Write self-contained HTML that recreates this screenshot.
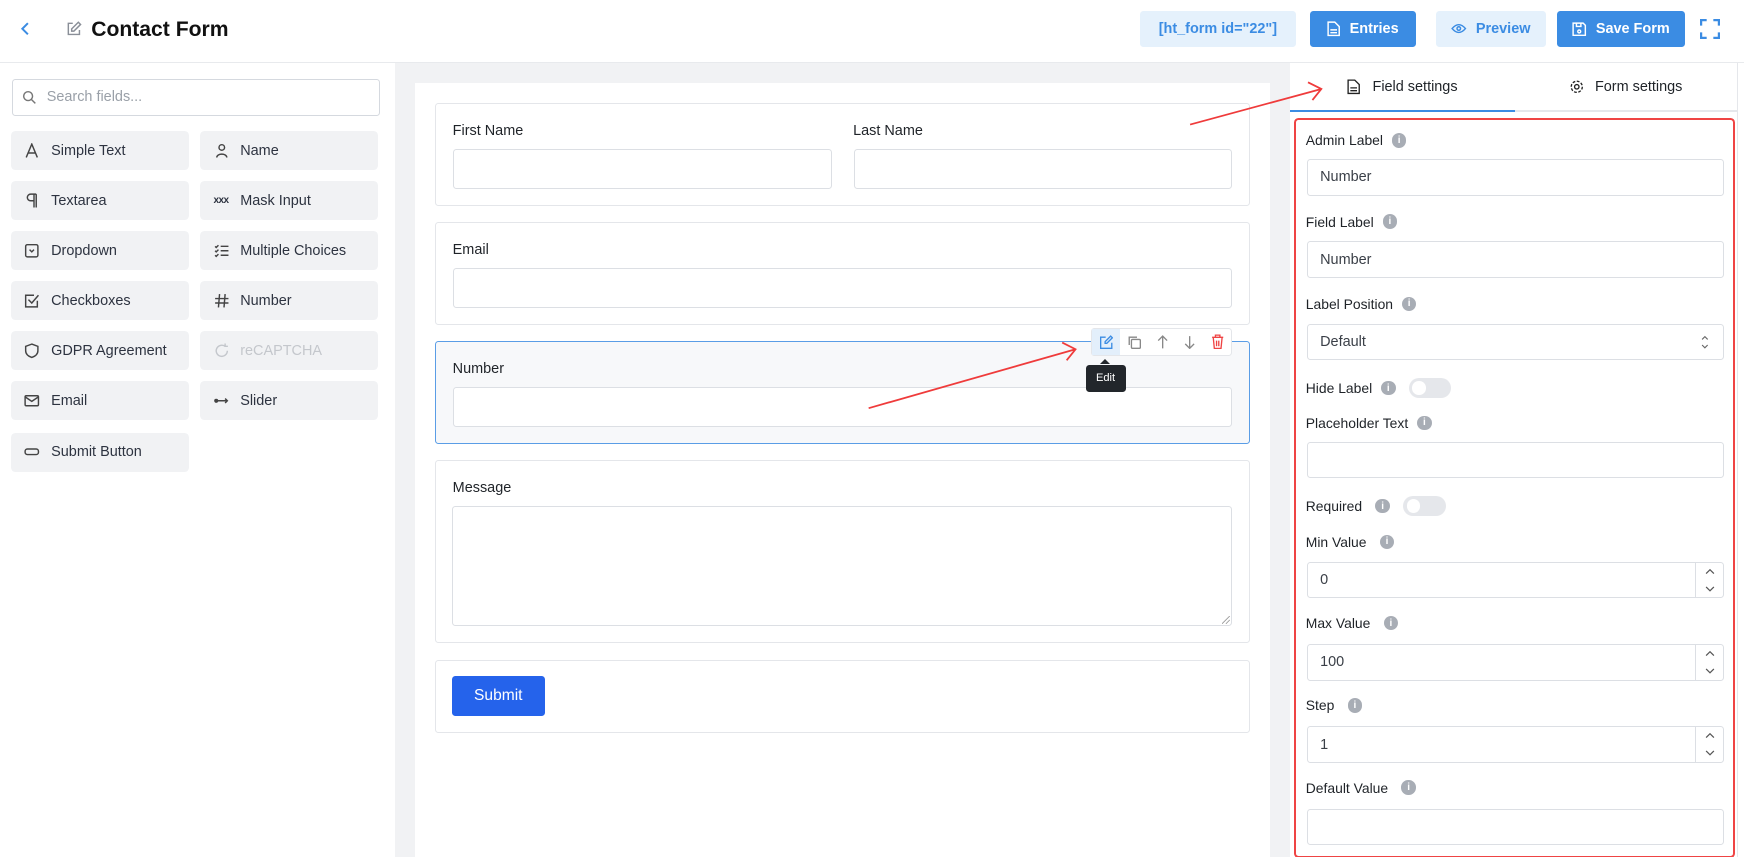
<!DOCTYPE html>
<html><head><meta charset="utf-8"><style>
*{box-sizing:border-box;margin:0;padding:0}
html,body{width:1744px;height:857px;overflow:hidden;background:#fff}
#w{position:relative;width:1568px;height:771px;zoom:1.11224;font-family:"Liberation Sans",sans-serif;color:#1f2328;font-size:13px}
.a{position:absolute}
.btn{position:absolute;top:10px;height:32px;border-radius:3px;display:flex;align-items:center;justify-content:center;font-weight:bold;font-size:13px;gap:8px}
.fb{position:absolute;width:160px;height:35px;background:#f1f2f4;border-radius:4px;display:flex;align-items:center;padding-left:12px;gap:10px;color:#2d3340;font-size:13px}
.fb svg{width:14px;height:14px}
.box{position:absolute;left:391px;width:733px;border:1px solid #e4e6ea;border-radius:3px;background:#fff}
.inp{position:absolute;border:1px solid #dcdfe4;border-radius:3px;background:#fff}
.lb{position:absolute;font-size:13px;color:#1f2328}
.rl{position:absolute;left:1174px;font-size:12.5px;color:#1f2328;display:flex;align-items:center;gap:8px}
.i{width:13px;height:13px;border-radius:50%;background:#a8adb5;color:#fff;font-size:9px;font-weight:bold;display:inline-flex;align-items:center;justify-content:center}
.ri{position:absolute;left:1175px;width:375px;height:33px;border:1px solid #dcdfe4;border-radius:3px;background:#fff;padding-left:11px;display:flex;align-items:center;font-size:13px;color:#3a3f47}
.tg{width:38px;height:18px;border-radius:9px;background:#e5e7eb;position:relative;margin-left:4px}
.tg:after{content:"";position:absolute;left:3px;top:3px;width:12px;height:12px;border-radius:50%;background:#fff}
.sp{position:absolute;right:0;top:0;width:25px;height:100%;border-left:1px solid #dcdfe4;display:flex;align-items:center;justify-content:center}
</style></head><body><div id="w">
<div class="a" style="left:0;top:56px;width:1568px;height:1px;background:#e8eaed"></div>
<svg class="a" style="left:17px;top:19px" width="12" height="14" viewBox="0 0 12 14"><path d="M8 2L3 7l5 5" stroke="#3b8ce3" stroke-width="1.8" fill="none"/></svg>
<svg class="a" style="left:58px;top:18px" width="16" height="16" viewBox="0 0 16 16" fill="none" stroke="#8a8f98" stroke-width="1.3"><path d="M7 3H3v10h10V9"/><path d="M12 2l2 2-6 6H6V8z"/></svg>
<div class="a" style="left:82px;top:16px;font-size:19px;font-weight:bold;color:#111">Contact Form</div>
<div class="btn" style="left:1025px;width:140px;background:#e5f1fc;color:#3b8ce3">[ht_form id="22"]</div>
<div class="btn" style="left:1178px;width:95px;background:#3b8ce3;color:#fff"><svg width="12" height="14" viewBox="0 0 12 14" fill="none" stroke="#fff" stroke-width="1.3"><path d="M1 1h6l4 4v8H1z M3 8h6M3 10.5h6"/></svg>Entries</div>
<div class="btn" style="left:1291px;width:99px;background:#e5f1fc;color:#3b8ce3"><svg width="14" height="10" viewBox="0 0 14 10" fill="none" stroke="#3b8ce3" stroke-width="1.3"><path d="M1 5q6-7 12 0q-6 7-12 0z"/><circle cx="7" cy="5" r="1.6"/></svg>Preview</div>
<div class="btn" style="left:1400px;width:115px;background:#3b8ce3;color:#fff"><svg width="13" height="13" viewBox="0 0 13 13" fill="none" stroke="#fff" stroke-width="1.3"><path d="M1 1h9l2 2v9H1z M4 1v3h4V1"/><circle cx="6.5" cy="8.5" r="1.3"/></svg>Save Form</div>
<svg class="a" style="left:1528px;top:17px" width="18" height="18" viewBox="0 0 18 18" fill="none" stroke="#3b8ce3" stroke-width="2"><path d="M1 6V1h5M12 1h5v5M17 12v5h-5M6 17H1v-5"/></svg>
<div class="a" style="left:11px;top:71px;width:331px;height:33px;border:1px solid #d5d9df;border-radius:3px"></div>
<svg class="a" style="left:20px;top:81px" width="13" height="13" viewBox="0 0 13 13" fill="none" stroke="#777" stroke-width="1.3"><circle cx="5.5" cy="5.5" r="4"/><path d="M8.5 8.5l3.5 3.5"/></svg>
<div class="a" style="left:42px;top:80px;color:#9aa0a8;font-size:13px">Search fields...</div>
<div class="fb" style="left:10px;top:118px"><svg viewBox="0 0 14 14" fill="none" stroke="#444" stroke-width="1.3"><path d="M2 13L7 1l5 12M4 9h6"/></svg>Simple Text</div>
<div class="fb" style="left:180px;top:118px"><svg viewBox="0 0 14 14" fill="none" stroke="#444" stroke-width="1.3"><circle cx="7" cy="4" r="2.5"/><path d="M2.5 13c0-4 9-4 9 0"/></svg>Name</div>
<div class="fb" style="left:10px;top:163px"><svg viewBox="0 0 14 14" fill="none" stroke="#444" stroke-width="1.3"><path d="M9 1v12M11 1v12M11 1H6a3 3 0 0 0 0 6h3"/></svg>Textarea</div>
<div class="fb" style="left:180px;top:163px"><span style="font-size:9px;font-weight:bold;width:14px;letter-spacing:-0.5px">xxx</span>Mask Input</div>
<div class="fb" style="left:10px;top:208px"><svg viewBox="0 0 14 14" fill="none" stroke="#444" stroke-width="1.3"><rect x="1.5" y="1.5" width="11" height="11" rx="1.5"/><path d="M5 6l2 2 2-2"/></svg>Dropdown</div>
<div class="fb" style="left:180px;top:208px"><svg viewBox="0 0 14 14" fill="none" stroke="#444" stroke-width="1.3"><path d="M6 3h7M6 7h7M6 11h7M1 3l1 1 2-2M1 7l1 1 2-2M1 11l1 1 2-2"/></svg>Multiple Choices</div>
<div class="fb" style="left:10px;top:253px"><svg viewBox="0 0 14 14" fill="none" stroke="#444" stroke-width="1.3"><path d="M12 7v5.5H1.5V2H9"/><path d="M4 6l3 3 6-7"/></svg>Checkboxes</div>
<div class="fb" style="left:180px;top:253px"><svg viewBox="0 0 14 14" fill="none" stroke="#444" stroke-width="1.3"><path d="M5 1L4 13M10 1L9 13M1 5h12M1 9h12"/></svg>Number</div>
<div class="fb" style="left:10px;top:298px"><svg viewBox="0 0 14 14" fill="none" stroke="#444" stroke-width="1.3"><path d="M7 1l5.5 2v4c0 3-2.5 5-5.5 6-3-1-5.5-3-5.5-6V3z"/></svg>GDPR Agreement</div>
<div class="fb" style="left:180px;top:298px;color:#c4c7cc"><svg viewBox="0 0 14 14" fill="none" stroke="#c4c7cc" stroke-width="1.3"><path d="M12 7a5 5 0 1 1-2-4M10 0.5V3h2.5"/></svg>reCAPTCHA</div>
<div class="fb" style="left:10px;top:343px"><svg viewBox="0 0 14 14" fill="none" stroke="#444" stroke-width="1.3"><rect x="1" y="2.5" width="12" height="9" rx="1"/><path d="M1 3.5l6 4 6-4"/></svg>Email</div>
<div class="fb" style="left:180px;top:343px"><svg viewBox="0 0 14 14" fill="none" stroke="#444" stroke-width="1.3"><circle cx="2" cy="7" r="1.2" fill="#444"/><path d="M3 7h9M10 5l2 2-2 2"/></svg>Slider</div>
<div class="fb" style="left:10px;top:389px"><svg viewBox="0 0 14 14" fill="none" stroke="#444" stroke-width="1.3"><rect x="1" y="4.5" width="12" height="5" rx="2"/></svg>Submit Button</div>
<div class="a" style="left:355px;top:57px;width:805px;height:714px;background:#f1f2f4"></div>
<div class="a" style="left:373px;top:75px;width:769px;height:696px;background:#fff"></div>
<div class="box" style="top:93px;height:92px"></div>
<div class="lb" style="left:407px;top:111px">First Name</div>
<div class="lb" style="left:767px;top:111px">Last Name</div>
<div class="inp" style="left:407px;top:134px;width:341px;height:36px"></div>
<div class="inp" style="left:768px;top:134px;width:340px;height:36px"></div>
<div class="box" style="top:200px;height:92px"></div>
<div class="lb" style="left:407px;top:218px">Email</div>
<div class="inp" style="left:407px;top:241px;width:701px;height:36px"></div>
<div class="box" style="top:307px;height:92px;border-color:#5a9de6;background:#f7f8fa"></div>
<div class="lb" style="left:407px;top:325px">Number</div>
<div class="inp" style="left:407px;top:348px;width:701px;height:36px"></div>
<div class="box" style="top:414px;height:164px"></div>
<div class="lb" style="left:407px;top:432px">Message</div>
<div class="inp" style="left:406px;top:455px;width:702px;height:108px"></div>
<svg class="a" style="left:1099px;top:554px" width="7" height="7" viewBox="0 0 7 7" stroke="#999" stroke-width="0.8"><path d="M0 7L7 0M3.5 7L7 3.5"/></svg>
<div class="box" style="top:593px;height:66px"></div>
<div class="a" style="left:406px;top:608px;width:84px;height:36px;background:#2563eb;border-radius:3px;color:#fff;font-size:14px;display:flex;align-items:center;justify-content:center">Submit</div>
<div class="a" style="left:981px;top:295px;width:127px;height:25px;background:#fff;border:1px solid #e4e6ea;border-radius:3px"></div>
<div class="a" style="left:982px;top:296px;width:25px;height:23px;background:#e3effb"></div>
<svg class="a" style="left:988px;top:301px" width="13" height="13" viewBox="0 0 13 13" fill="none" stroke="#3b8ce3" stroke-width="1.2"><path d="M6 2H1.5v10h10V7"/><path d="M10.5 1l1.5 1.5-5 5H5.5V6z"/></svg>
<svg class="a" style="left:1013px;top:301px" width="13" height="13" viewBox="0 0 13 13" fill="none" stroke="#888" stroke-width="1.2"><rect x="4" y="4" width="8" height="8" rx="1"/><path d="M2 9V2h7"/></svg>
<svg class="a" style="left:1039px;top:301px" width="12" height="13" viewBox="0 0 12 13" fill="none" stroke="#888" stroke-width="1.2"><path d="M6 12V1M2 5l4-4 4 4"/></svg>
<svg class="a" style="left:1064px;top:301px" width="12" height="13" viewBox="0 0 12 13" fill="none" stroke="#888" stroke-width="1.2"><path d="M6 1v11M2 8l4 4 4-4"/></svg>
<svg class="a" style="left:1089px;top:300px" width="12" height="14" viewBox="0 0 12 14" fill="none" stroke="#ef4444" stroke-width="1.2"><path d="M1 3h10M4 3V1h4v2M2 3l1 10h6l1-10M5 6v5M7 6v5"/></svg>
<div class="a" style="left:976px;top:328px;width:36px;height:24px;background:#22262b;border-radius:3px;color:#fff;font-size:10px;display:flex;align-items:center;justify-content:center">Edit</div>
<div class="a" style="left:989px;top:323px;width:0;height:0;border:5px solid transparent;border-bottom-color:#22262b;border-top:0"></div>
<div class="a" style="left:1160px;top:99px;width:403px;height:2px;background:#e5e7eb"></div>
<div class="a" style="left:1160px;top:99px;width:202px;height:2px;background:#3b8ce3"></div>
<div class="a" style="left:1562px;top:57px;width:1px;height:714px;background:#e5e7eb"></div>
<svg class="a" style="left:1211px;top:71px" width="12" height="14" viewBox="0 0 12 14" fill="none" stroke="#222" stroke-width="1.2"><path d="M1 1h6l4 4v8H1z M3 8h6M3 10.5h6"/></svg>
<div class="a" style="left:1234px;top:71px;font-size:13px">Field settings</div>
<svg class="a" style="left:1411px;top:71px" width="14" height="14" viewBox="0 0 14 14" fill="none" stroke="#222" stroke-width="1.2"><circle cx="7" cy="7" r="2"/><circle cx="7" cy="7" r="5" stroke-dasharray="2.5 1.4"/></svg>
<div class="a" style="left:1434px;top:71px;font-size:13px">Form settings</div>
<div class="a" style="left:1163px;top:106px;width:397px;height:665px;border:2px solid #ef4444;border-radius:4px"></div>
<div class="rl" style="top:119px">Admin Label <span class="i">i</span></div>
<div class="ri" style="top:143px">Number</div>
<div class="rl" style="top:192px">Field Label <span class="i">i</span></div>
<div class="ri" style="top:217px">Number</div>
<div class="rl" style="top:266px">Label Position <span class="i">i</span></div>
<div class="ri" style="top:291px">Default<svg style="position:absolute;right:13px;top:9px" width="7" height="13" viewBox="0 0 7 13" fill="none" stroke="#666" stroke-width="1"><path d="M1 4l2.5-2.5L6 4M1 9l2.5 2.5L6 9"/></svg></div>
<div class="rl" style="top:340px">Hide Label <span class="i">i</span><span class="tg"></span></div>
<div class="rl" style="top:373px">Placeholder Text <span class="i">i</span></div>
<div class="ri" style="top:397px"></div>
<div class="rl" style="top:446px">Required <span class="i" style="margin-left:4px">i</span><span class="tg"></span></div>
<div class="rl" style="top:480px">Min Value <span class="i" style="margin-left:4px">i</span></div>
<div class="ri" style="top:505px">0<span class="sp"><svg width="9" height="22" viewBox="0 0 9 22" fill="none" stroke="#555" stroke-width="1.1"><path d="M1 5l3.5-3.5L8 5M1 17l3.5 3.5L8 17"/></svg></span></div>
<div class="rl" style="top:553px">Max Value <span class="i" style="margin-left:4px">i</span></div>
<div class="ri" style="top:579px">100<span class="sp"><svg width="9" height="22" viewBox="0 0 9 22" fill="none" stroke="#555" stroke-width="1.1"><path d="M1 5l3.5-3.5L8 5M1 17l3.5 3.5L8 17"/></svg></span></div>
<div class="rl" style="top:627px">Step <span class="i" style="margin-left:4px">i</span></div>
<div class="ri" style="top:653px">1<span class="sp"><svg width="9" height="22" viewBox="0 0 9 22" fill="none" stroke="#555" stroke-width="1.1"><path d="M1 5l3.5-3.5L8 5M1 17l3.5 3.5L8 17"/></svg></span></div>
<div class="rl" style="top:701px">Default Value <span class="i" style="margin-left:4px">i</span></div>
<div class="ri" style="top:727px"></div>
<svg class="a" style="left:0;top:0" width="1568" height="771" fill="none" stroke="#ef3b3b" stroke-width="1.6">
<path d="M1070 112L1188 80M1176 74l12 6-8 10"/>
<path d="M781 367L967 314M955 308l12 6-8 10"/>
</svg>
</div></body></html>
